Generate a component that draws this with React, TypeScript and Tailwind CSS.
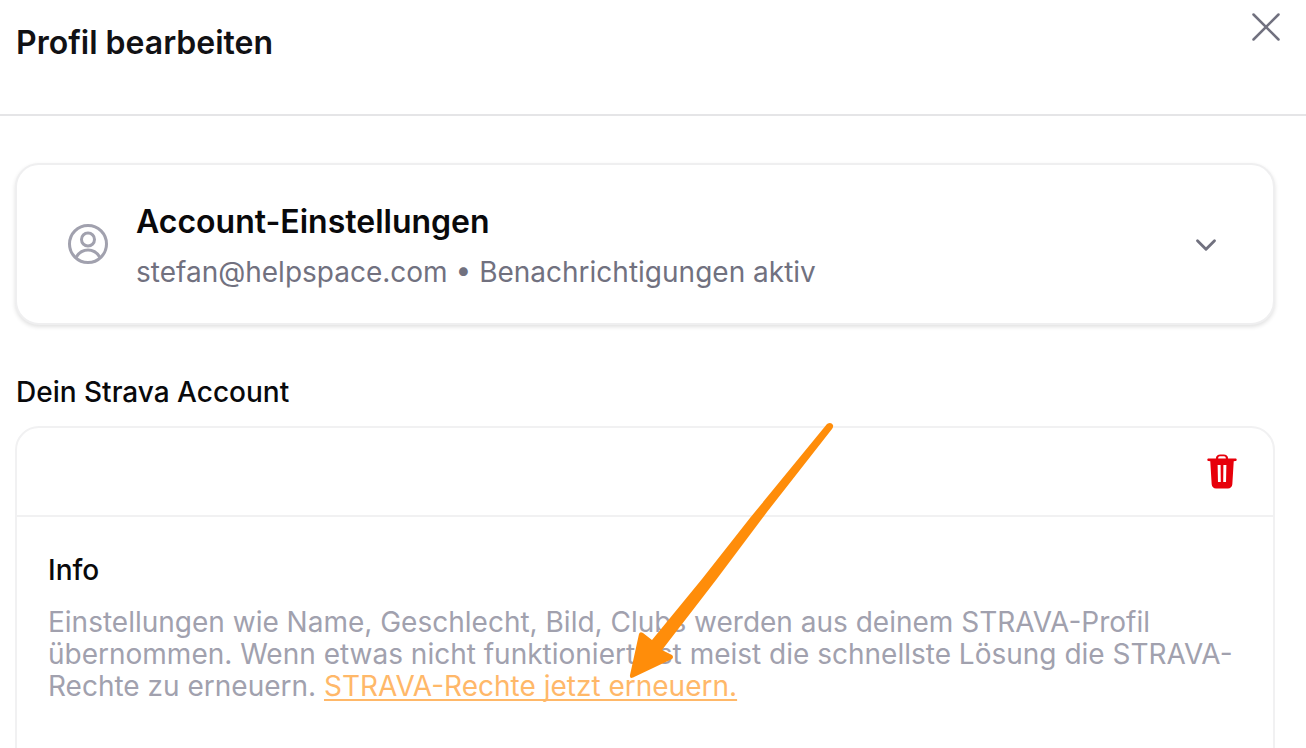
import React from 'react';
import { ChevronDown, X } from 'lucide-react';

const App: React.FC = () => {
  return (
    <div className="relative h-[748px] w-[1306px] overflow-hidden bg-white font-['Inter',sans-serif] [font-optical-sizing:none]">
      {/* Header */}
      <header className="flex h-[116px] items-start justify-between border-b-2 border-[#e5e5e7] pl-[16px] pr-[15px]">
        <h1 className="mt-[23px] text-[32px] leading-[40px] font-semibold text-[#111114]">Profil bearbeiten</h1>
        <button className="mt-[2px] text-[#71717f]">
          <X className="h-[50px] w-[50px]" strokeWidth={1.2} />
        </button>
      </header>

      <main className="pl-[15px] pr-[31px] pt-[47px]">
        {/* Account settings */}
        <section className="flex h-[162px] items-center rounded-[24px] border-2 border-[#efeff0] bg-white pl-[47px] pr-[50px] shadow-[0_2px_4px_rgba(0,0,0,0.12)]">
          <svg className="h-[48px] w-[48px] text-[#a1a1ae]" viewBox="0 0 24 24" fill="none" stroke="currentColor" strokeWidth={1.5} strokeLinecap="round" strokeLinejoin="round">
            <circle cx="12" cy="12" r="9.25" />
            <circle cx="12" cy="9.75" r="3.25" />
            <path d="M6.300 18.300c1.300-2.100 3.300-3.300 5.700-3.300s4.400 1.200 5.700 3.300" />
          </svg>
          <div className="ml-[24px] flex-1">
            <h2 className="mt-[4px] text-[32px] leading-[38px] font-semibold text-[#09090b]">Account-Einstellungen</h2>
            <p className="mt-[14px] text-[28px] leading-[34px] text-[#71717f]">stefan@helpspace.com • Benachrichtigungen aktiv</p>
          </div>
          <ChevronDown className="mt-[2px] h-[34px] w-[34px] text-[#71717f]" strokeWidth={2} />
        </section>

        <h3 className="mt-[49px] ml-[1px] text-[28px] leading-[36px] font-medium text-[#09090b]">Dein Strava Account</h3>

        {/* Strava card */}
        <section className="mt-[16px] h-[400px] rounded-t-[24px] border-2 border-[#f1f1f2] bg-white">
          <div className="flex h-[89px] items-center justify-end border-b-2 border-[#f1f1f2] pr-[30px]">
            <svg className="mt-[-2px] h-[42px] w-[42px] text-[#e7000b]" viewBox="0 0 24 24" fill="currentColor">
              <path fillRule="evenodd" d="M8.500 4.800C8.500 3.300 9.700 2.500 11 2.500h2c1.300 0 2.500.8 2.500 2.300h4.100c.5 0 .8.300.8.700 0 .4-.3.700-.8.800l-.9.100-.8 13.200c-.1 1.400-1.100 2.400-2.500 2.400H8.600c-1.400 0-2.400-1-2.500-2.400L5.300 6.400l-.9-.1c-.5-.1-.8-.4-.8-.8 0-.4.300-.7.800-.7h4.100zM9.800 4.800h4.400c0-.8-.4-1.200-1-1.200h-2.400c-.6 0-1 .4-1 1.200zM9.500 8.500l.2 9.800h1.600l-.1-9.800H9.500zM12.800 8.500l-.1 9.800h1.600l.2-9.800h-1.700z" />
            </svg>
          </div>
          <div className="pl-[31px] pr-[30px] pt-[34px]">
            <h4 className="text-[28px] leading-[38px] font-medium text-[#09090b]">Info</h4>
            <p className="mt-[17px] text-[28px] leading-[32px] text-[#a1a1ae]">
              Einstellungen wie Name, Geschlecht, Bild, Clubs werden aus deinem STRAVA-Profil übernommen. Wenn etwas nicht funktioniert, ist meist die schnellste Lösung die STRAVA-Rechte zu erneuern.{' '}
              <a href="#" className="text-[#ffb869] underline decoration-2 underline-offset-[3px] [text-decoration-skip-ink:none]">STRAVA-Rechte jetzt erneuern.</a>
            </p>
          </div>
        </section>
      </main>

      {/* Annotation arrow over the page */}
      <svg className="absolute left-0 top-0 h-[748px] w-[1306px]" viewBox="0 0 1306 748" fill="none">
        <path d="M827 424 Q831 421.500 833 425 Q833.500 427 832 429 L767 512 L716 580 L662 650 L672 655 Q674 657 672 659 L633 677.500 Q629.500 679 630 675 L639 634 Q640 631 643 633 L652 640 L702 579 L750 518 Z" fill="#ff8d0a" />
      </svg>
    </div>
  );
};

export default App;
